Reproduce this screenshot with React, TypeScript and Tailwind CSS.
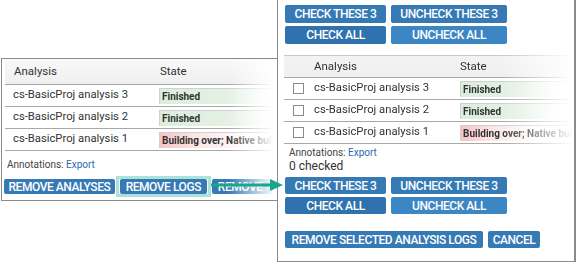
import React from "react";

const font = { fontFamily: "Roboto, 'Liberation Sans', sans-serif" };

function Btn({ children, w, h = "h-[17px]", light = false, dark = false }: { children: React.ReactNode; w: string; h?: string; light?: boolean; dark?: boolean }) {
  const bg = light ? "bg-[#3d86c4]" : dark ? "bg-[#2f72ae]" : "bg-[#3579b5]";
  return (
    <div className={`${w} ${h} ${bg} rounded-[2px] flex items-center justify-center text-white text-[12px] font-medium tracking-[-0.45px] uppercase whitespace-nowrap overflow-hidden`}>
      {children}
    </div>
  );
}

function StateCell({ kind, text }: { kind: "ok" | "bad"; text: string }) {
  const bg =
    kind === "ok"
      ? "bg-[linear-gradient(to_right,#dbeedc,#e4f1e4_55%,#ffffff_95%)]"
      : "bg-[linear-gradient(to_right,#f7c3c3,#fbe3e3_25%,#ffffff_70%)]";
  return (
    <div className={`h-[16px] flex-1 min-w-0 border-l border-t border-[#d0d0d0] ${bg} flex items-center pl-[2px] text-[10px] font-bold text-[#333] whitespace-nowrap overflow-hidden`}>
      {text}
    </div>
  );
}

function LeftRow({ name, kind, text }: { name: string; kind: "ok" | "bad"; text: string }) {
  return (
    <div className="h-[22px] border-b border-[#a8a8a8] flex items-center">
      <div className="w-[154px] pl-[8px] text-[11.25px] text-[#333]">{name}</div>
      <StateCell kind={kind} text={text} />
    </div>
  );
}

function RightRow({ name, kind, text }: { name: string; kind: "ok" | "bad"; text: string }) {
  return (
    <div className="h-[22px] border-b border-[#a8a8a8] flex items-center">
      <div className="w-[11px] h-[11px] border border-[#8a8a8a] bg-white ml-[9px] mr-[10px]" />
      <div className="w-[146px] text-[11.25px] text-[#333]">{name}</div>
      <StateCell kind={kind} text={text} />
    </div>
  );
}

export default function App() {
  return (
    <div className="relative w-[576px] h-[262px] bg-white overflow-hidden" style={font}>
      {/* Left panel */}
      <div className="absolute left-[1px] top-[58px] w-[290px] h-[143px] border-l border-t border-b border-[#8a8a8a] bg-white">
        <div className="ml-[3px]">
          <div className="h-[26px] border-b border-[#a8a8a8] flex items-center bg-[linear-gradient(to_bottom,#f9f9f9,#efefef)]">
            <div className="w-[155px] pl-[9px] text-[11.5px] text-[#333]">Analysis</div>
            <div className="text-[11.5px] text-[#333]">State</div>
          </div>
          <LeftRow name="cs-BasicProj analysis 3" kind="ok" text="Finished" />
          <LeftRow name="cs-BasicProj analysis 2" kind="ok" text="Finished" />
          <LeftRow name="cs-BasicProj analysis 1" kind="bad" text="Building over; Native bui" />
        </div>
        <div className="mt-[8px] ml-[5px] text-[10px] leading-[12px] text-[#444]">
          Annotations: <span className="text-[#2a6cb0]">Export</span>
        </div>
        <div className="mt-[8px] ml-[2px] flex items-center gap-[1px]">
          <Btn w="w-[112px]" h="h-[15px]">Remove analyses</Btn>
          <div className="border-[3px] border-[#abe3d8] px-[1px] -my-[3px]">
            <Btn w="w-[87px]" h="h-[15px]">Remove logs</Btn>
          </div>
          <div className="w-[80px] h-[15px] bg-[#3579b5] rounded-l-[2px] flex items-center pl-[6px] text-white text-[12px] font-medium tracking-[-0.45px] uppercase whitespace-nowrap">
            Remove
          </div>
        </div>
        <div className="absolute left-[226px] top-0 bottom-0 w-[66px] bg-[linear-gradient(to_right,rgba(255,255,255,0),#ffffff_70%)]" />
      </div>

      {/* Right panel */}
      <div className="absolute left-[277px] top-[-2px] w-[299px] h-[264px] border-l border-r-2 border-b border-[#8a8a8a] bg-white">
        <div className="pt-[7px] pl-[7px] flex flex-col gap-[3px]">
          <div className="flex gap-[5px]">
            <Btn w="w-[101px]" h="h-[18px]">Check these 3</Btn>
            <Btn w="w-[116px]" h="h-[18px]">Uncheck these 3</Btn>
          </div>
          <div className="flex gap-[5px]">
            <Btn w="w-[101px]" h="h-[18px]" dark>Check all</Btn>
            <Btn w="w-[116px]" h="h-[18px]" light>Uncheck all</Btn>
          </div>
        </div>
        <div className="mt-[11px] ml-[6px] [mask-image:linear-gradient(to_right,black_75%,transparent)]">
          <div className="h-[23px] border-b border-[#a8a8a8] border-t border-t-[#c8c8c8] flex items-center bg-[linear-gradient(to_bottom,#f3f3f3,#f0f0f0)]">
            <div className="w-[176px] pl-[30px] text-[11.5px] text-[#333]">Analysis</div>
            <div className="text-[11.5px] text-[#333]">State</div>
          </div>
          <RightRow name="cs-BasicProj analysis 3" kind="ok" text="Finished" />
          <RightRow name="cs-BasicProj analysis 2" kind="ok" text="Finished" />
          <RightRow name="cs-BasicProj analysis 1" kind="bad" text="Building over; Native bui" />
        </div>
        <div className="ml-[11px] mt-[3px] text-[10px] leading-[12px] text-[#444]">
          Annotations: <span className="text-[#2a6cb0]">Export</span>
        </div>
        <div className="ml-[11px] text-[12px] leading-[14px] text-[#333]">0 checked</div>
        <div className="pl-[7px] mt-[4px] flex flex-col gap-[3px]">
          <div className="flex gap-[5px]">
            <Btn w="w-[101px]">Check these 3</Btn>
            <Btn w="w-[116px]">Uncheck these 3</Btn>
          </div>
          <div className="flex gap-[5px]">
            <Btn w="w-[101px]" dark>Check all</Btn>
            <Btn w="w-[116px]" light>Uncheck all</Btn>
          </div>
          <div className="flex gap-[5px] mt-[14px]">
            <Btn w="w-[198px]">Remove selected analysis logs</Btn>
            <Btn w="w-[52px]">Cancel</Btn>
          </div>
        </div>
      </div>

      {/* Arrow (over both panels) */}
      <svg className="absolute left-[211px] top-[178px]" width="73" height="14" viewBox="0 0 73 14">
        <line x1="0" y1="7" x2="61" y2="7" stroke="#19a68a" strokeWidth="3" />
        <polygon points="59,1 72,7 59,13" fill="#19a68a" />
      </svg>
    </div>
  );
}
